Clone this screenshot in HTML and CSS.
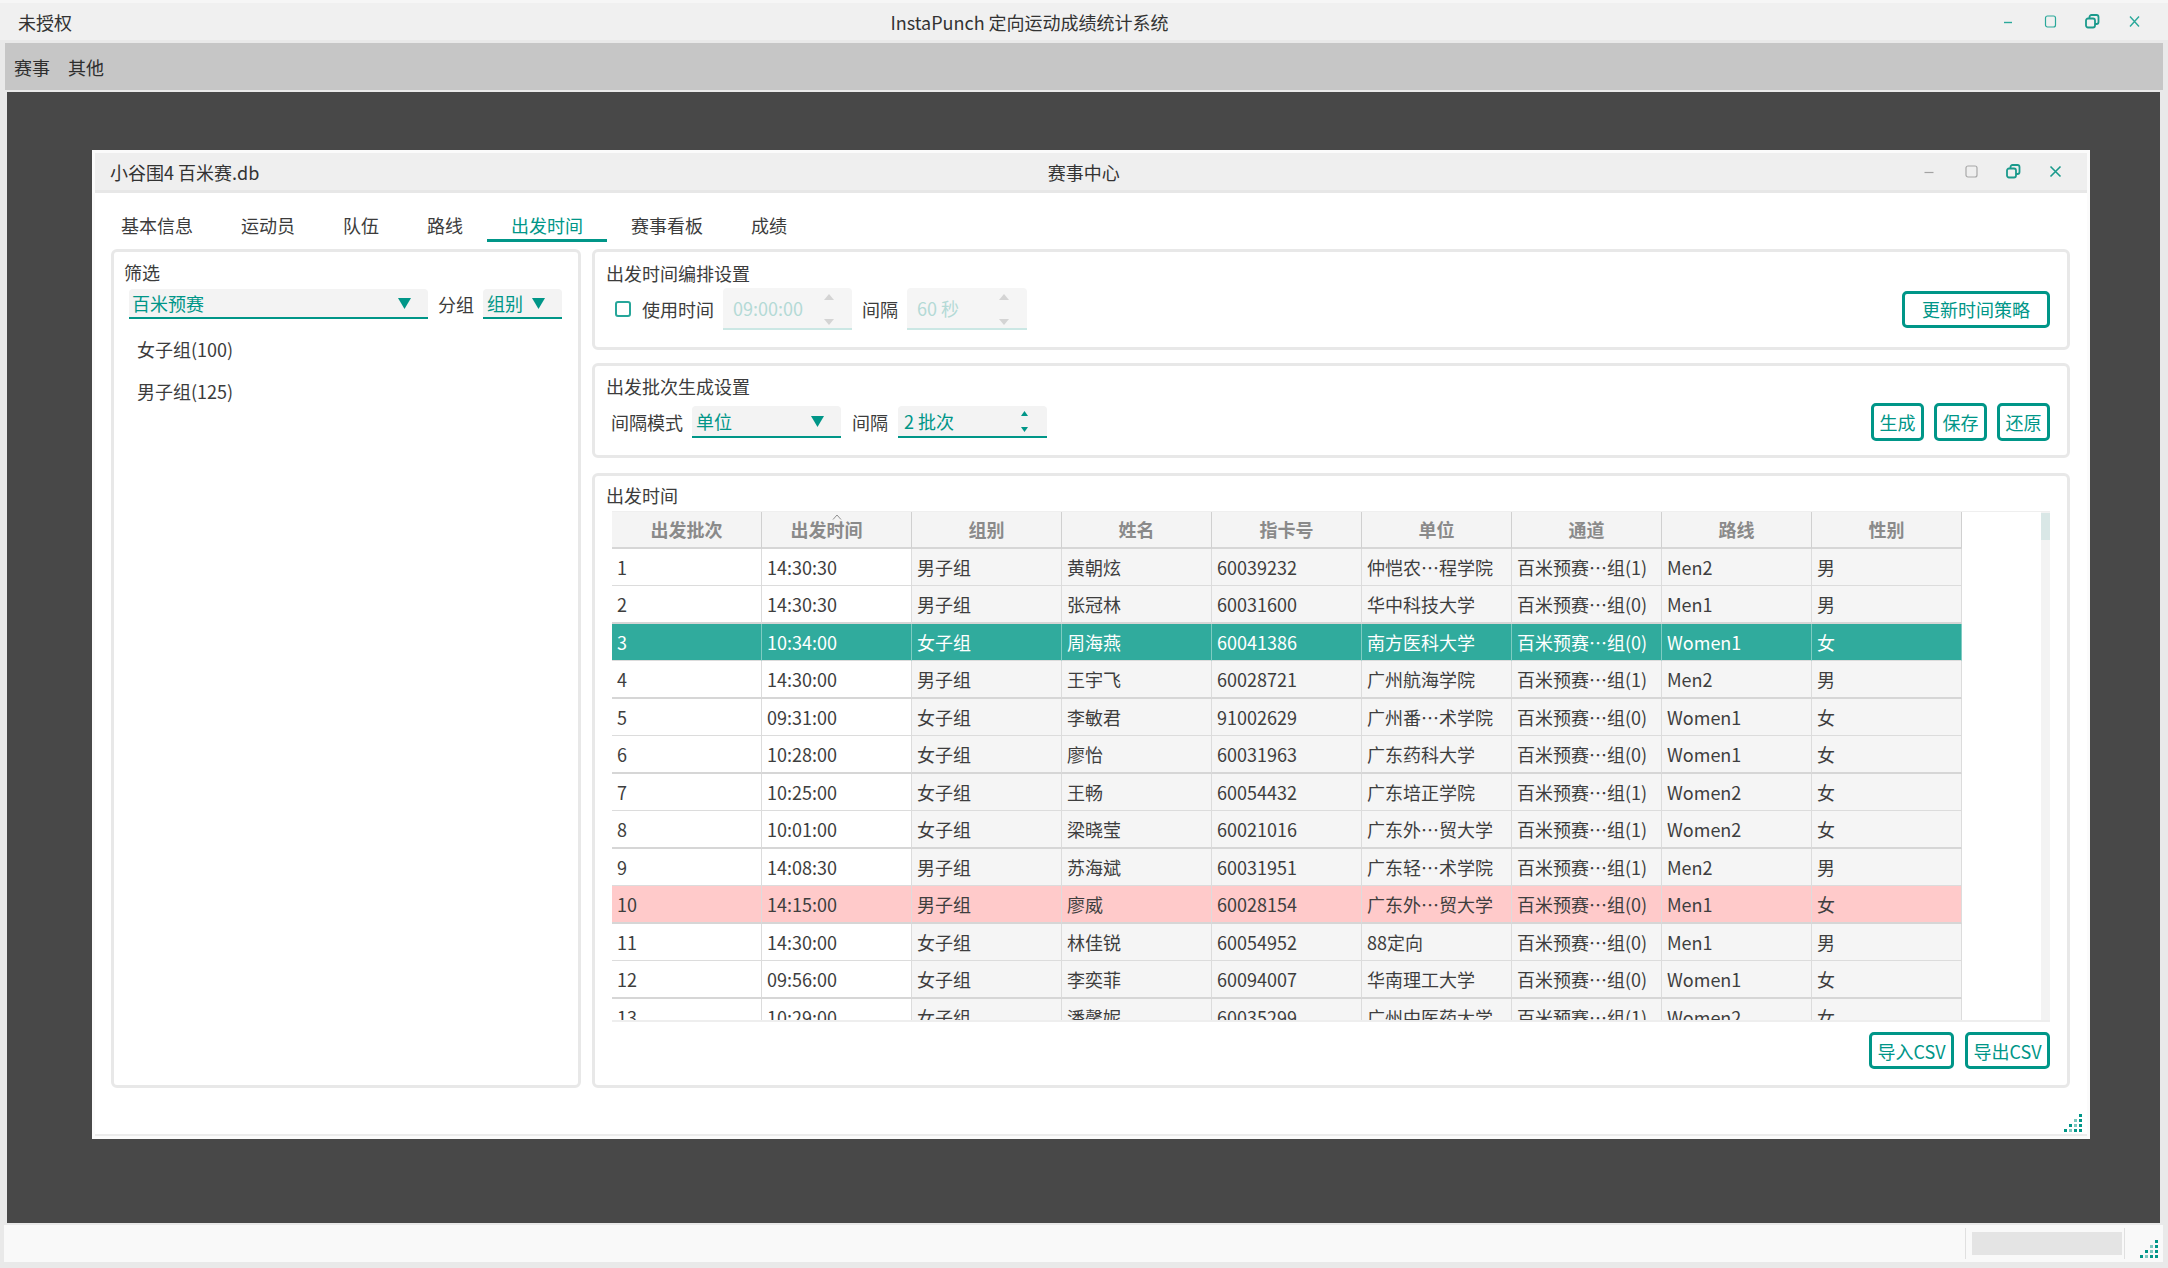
FILE: index.html
```html
<!DOCTYPE html>
<html lang="zh-CN">
<head>
<meta charset="utf-8">
<title>InstaPunch 定向运动成绩统计系统</title>
<link rel="stylesheet" href="styles.css">
</head>
<body>
<div class="app">
  <div class="titlebar">
    <div class="tb-label">未授权</div>
    <div class="tb-title">InstaPunch 定向运动成绩统计系统</div>
    <div class="controls outer-controls">
      <span class="ctl"><svg width="12" height="12" viewBox="0 0 12 12"><line x1="2" y1="6.5" x2="10" y2="6.5" stroke="#2aa89a" stroke-width="1.4"/></svg></span>
      <span class="ctl"><svg width="13" height="13" viewBox="0 0 13 13"><rect x="1.5" y="1" width="10" height="11" rx="2" fill="none" stroke="#2aa89a" stroke-width="1.2"/></svg></span>
      <span class="ctl"><svg width="15" height="15" viewBox="0 0 15 15"><rect x="4.5" y="1" width="9" height="9" rx="2" fill="none" stroke="#1a9a8c" stroke-width="1.8"/><rect x="1" y="4.5" width="9" height="9" rx="2" fill="#f0f0f0" stroke="#1a9a8c" stroke-width="1.8"/></svg></span>
      <span class="ctl"><svg width="13" height="13" viewBox="0 0 13 13"><path d="M2 1.5 L11 11.5 M11 1.5 L2 11.5" stroke="#2aa89a" stroke-width="1.4" fill="none"/></svg></span>
    </div>
  </div>
  <div class="menubar">
    <span class="menu-item">赛事</span>
    <span class="menu-item">其他</span>
  </div>
  <div class="mdi">
    <div class="subwin">
      <div class="sub-titlebar">
        <div class="tb-label">小谷围4 百米赛.db</div>
        <div class="tb-title">赛事中心</div>
        <div class="controls sub-controls">
          <span class="ctl"><svg width="12" height="12" viewBox="0 0 12 12"><line x1="1.5" y1="6.5" x2="10.5" y2="6.5" stroke="#a3a3a3" stroke-width="1.2"/></svg></span>
          <span class="ctl"><svg width="13" height="13" viewBox="0 0 13 13"><rect x="1" y="1" width="11" height="11" rx="2" fill="none" stroke="#a8a8a8" stroke-width="1.2"/></svg></span>
          <span class="ctl"><svg width="15" height="15" viewBox="0 0 15 15"><rect x="4.5" y="1" width="9" height="9" rx="2" fill="none" stroke="#1a9a8c" stroke-width="1.8"/><rect x="1" y="4.5" width="9" height="9" rx="2" fill="#efefef" stroke="#1a9a8c" stroke-width="1.8"/></svg></span>
          <span class="ctl"><svg width="13" height="13" viewBox="0 0 13 13"><path d="M1.5 1.5 L11.5 11.5 M11.5 1.5 L1.5 11.5" stroke="#1a9a8c" stroke-width="1.6" fill="none"/></svg></span>
        </div>
      </div>
      <div class="sub-content">
        <div class="tabs">
          <span class="tab">基本信息</span>
          <span class="tab">运动员</span>
          <span class="tab">队伍</span>
          <span class="tab">路线</span>
          <span class="tab active">出发时间</span>
          <span class="tab">赛事看板</span>
          <span class="tab">成绩</span>
        </div>
        <div class="panels">
          <div class="panel left-panel">
            <div class="flabel">筛选</div>
            <div class="filter-row">
              <div class="combo combo-race"><span>百米预赛</span><svg width="13" height="11" viewBox="0 0 13 11"><polygon points="0,0 13,0 6.5,11" fill="#009688"/></svg></div>
              <span class="lbl">分组</span>
              <div class="combo combo-group"><span>组别</span><svg width="13" height="11" viewBox="0 0 13 11"><polygon points="0,0 13,0 6.5,11" fill="#009688"/></svg></div>
            </div>
            <div class="group-list">
              <div class="group-item">女子组(100)</div>
              <div class="group-item">男子组(125)</div>
            </div>
          </div>
          <div class="right-col">
            <div class="panel box1">
              <div class="box-title">出发时间编排设置</div>
              <div class="row1">
                <span class="checkbox"></span>
                <span class="lbl lbl-use">使用时间</span>
                <div class="spin spin-dis spin-time">
                  <span>09:00:00</span>
                  <span class="arrows dis-arrows">
                    <svg width="10" height="6" viewBox="0 0 10 6"><polygon points="0,6 10,6 5,0" fill="#d4d4d4"/></svg>
                    <svg width="10" height="6" viewBox="0 0 10 6"><polygon points="0,0 10,0 5,6" fill="#d4d4d4"/></svg>
                  </span>
                </div>
                <span class="lbl lbl-gap1">间隔</span>
                <div class="spin spin-dis spin-sec">
                  <span>60 秒</span>
                  <span class="arrows dis-arrows">
                    <svg width="10" height="6" viewBox="0 0 10 6"><polygon points="0,6 10,6 5,0" fill="#d4d4d4"/></svg>
                    <svg width="10" height="6" viewBox="0 0 10 6"><polygon points="0,0 10,0 5,6" fill="#d4d4d4"/></svg>
                  </span>
                </div>
                <button class="btn btn-wide">更新时间策略</button>
              </div>
            </div>
            <div class="panel box2">
              <div class="box-title">出发批次生成设置</div>
              <div class="row2">
                <span class="lbl lbl-mode">间隔模式</span>
                <div class="combo combo-unit"><span>单位</span><svg width="13" height="11" viewBox="0 0 13 11"><polygon points="0,0 13,0 6.5,11" fill="#009688"/></svg></div>
                <span class="lbl lbl-gap2">间隔</span>
                <div class="spin spin-batch">
                  <span>2 批次</span>
                  <span class="arrows en-arrows">
                    <svg width="7" height="5" viewBox="0 0 7 5"><polygon points="0,5 7,5 3.5,0" fill="#009688"/></svg>
                    <svg width="7" height="5" viewBox="0 0 7 5"><polygon points="0,0 7,0 3.5,5" fill="#009688"/></svg>
                  </span>
                </div>
                <div class="btn-group">
                  <button class="btn btn-sm">生成</button>
                  <button class="btn btn-sm">保存</button>
                  <button class="btn btn-sm">还原</button>
                </div>
              </div>
            </div>
            <div class="panel box3">
              <div class="box-title">出发时间</div>
              <div class="tview">
                <div class="tgrid">
                  <div class="thead">
                    <div class="th">出发批次</div>
                    <div class="th sorted">出发时间<svg class="sort" width="10" height="6" viewBox="0 0 10 6"><polyline points="1,5.5 5,1 9,5.5" fill="none" stroke="#8f8f8f" stroke-width="1"/></svg></div>
                    <div class="th">组别</div>
                    <div class="th">姓名</div>
                    <div class="th">指卡号</div>
                    <div class="th">单位</div>
                    <div class="th">通道</div>
                    <div class="th">路线</div>
                    <div class="th">性别</div>
                  </div>
                  <div class="tbody">
                    <div class="tr"><div class="td">1</div><div class="td">14:30:30</div><div class="td">男子组</div><div class="td">黄朝炫</div><div class="td">60039232</div><div class="td">仲恺农…程学院</div><div class="td">百米预赛…组(1)</div><div class="td">Men2</div><div class="td">男</div></div>
                    <div class="tr"><div class="td">2</div><div class="td">14:30:30</div><div class="td">男子组</div><div class="td">张冠林</div><div class="td">60031600</div><div class="td">华中科技大学</div><div class="td">百米预赛…组(0)</div><div class="td">Men1</div><div class="td">男</div></div>
                    <div class="tr sel"><div class="td">3</div><div class="td">10:34:00</div><div class="td">女子组</div><div class="td">周海燕</div><div class="td">60041386</div><div class="td">南方医科大学</div><div class="td">百米预赛…组(0)</div><div class="td">Women1</div><div class="td">女</div></div>
                    <div class="tr"><div class="td">4</div><div class="td">14:30:00</div><div class="td">男子组</div><div class="td">王宇飞</div><div class="td">60028721</div><div class="td">广州航海学院</div><div class="td">百米预赛…组(1)</div><div class="td">Men2</div><div class="td">男</div></div>
                    <div class="tr"><div class="td">5</div><div class="td">09:31:00</div><div class="td">女子组</div><div class="td">李敏君</div><div class="td">91002629</div><div class="td">广州番…术学院</div><div class="td">百米预赛…组(0)</div><div class="td">Women1</div><div class="td">女</div></div>
                    <div class="tr"><div class="td">6</div><div class="td">10:28:00</div><div class="td">女子组</div><div class="td">廖怡</div><div class="td">60031963</div><div class="td">广东药科大学</div><div class="td">百米预赛…组(0)</div><div class="td">Women1</div><div class="td">女</div></div>
                    <div class="tr"><div class="td">7</div><div class="td">10:25:00</div><div class="td">女子组</div><div class="td">王畅</div><div class="td">60054432</div><div class="td">广东培正学院</div><div class="td">百米预赛…组(1)</div><div class="td">Women2</div><div class="td">女</div></div>
                    <div class="tr"><div class="td">8</div><div class="td">10:01:00</div><div class="td">女子组</div><div class="td">梁晓莹</div><div class="td">60021016</div><div class="td">广东外…贸大学</div><div class="td">百米预赛…组(1)</div><div class="td">Women2</div><div class="td">女</div></div>
                    <div class="tr"><div class="td">9</div><div class="td">14:08:30</div><div class="td">男子组</div><div class="td">苏海斌</div><div class="td">60031951</div><div class="td">广东轻…术学院</div><div class="td">百米预赛…组(1)</div><div class="td">Men2</div><div class="td">男</div></div>
                    <div class="tr warn"><div class="td">10</div><div class="td">14:15:00</div><div class="td">男子组</div><div class="td">廖威</div><div class="td">60028154</div><div class="td">广东外…贸大学</div><div class="td">百米预赛…组(0)</div><div class="td">Men1</div><div class="td">女</div></div>
                    <div class="tr"><div class="td">11</div><div class="td">14:30:00</div><div class="td">女子组</div><div class="td">林佳锐</div><div class="td">60054952</div><div class="td">88定向</div><div class="td">百米预赛…组(0)</div><div class="td">Men1</div><div class="td">男</div></div>
                    <div class="tr"><div class="td">12</div><div class="td">09:56:00</div><div class="td">女子组</div><div class="td">李奕菲</div><div class="td">60094007</div><div class="td">华南理工大学</div><div class="td">百米预赛…组(0)</div><div class="td">Women1</div><div class="td">女</div></div>
                    <div class="tr"><div class="td">13</div><div class="td">10:29:00</div><div class="td">女子组</div><div class="td">潘馨妮</div><div class="td">60035299</div><div class="td">广州中医药大学</div><div class="td">百米预赛…组(1)</div><div class="td">Women2</div><div class="td">女</div></div>
                  </div>
                </div>
                <div class="tspacer"></div>
                <div class="vscroll"><div class="vhandle"></div></div>
              </div>
              <div class="csv-row">
                <button class="btn btn-csv">导入CSV</button>
                <button class="btn btn-csv">导出CSV</button>
              </div>
            </div>
          </div>
        </div>
      </div>
      <svg class="grip sub-grip" width="22" height="22" viewBox="0 0 22 22">
        <rect x="17" y="2" width="3" height="3" fill="#009688"/>
        <rect x="12" y="7" width="3" height="3" fill="#7cc8c0"/>
        <rect x="17" y="7" width="3" height="3" fill="#009688"/>
        <rect x="7" y="12" width="3" height="3" fill="#009688"/>
        <rect x="12" y="12" width="3" height="3" fill="#7cc8c0"/>
        <rect x="17" y="12" width="3" height="3" fill="#009688"/>
        <rect x="2" y="17" width="3" height="3" fill="#009688"/>
        <rect x="7" y="17" width="3" height="3" fill="#7cc8c0"/>
        <rect x="12" y="17" width="3" height="3" fill="#009688"/>
        <rect x="17" y="17" width="3" height="3" fill="#009688"/>
      </svg>
    </div>
  </div>
  <div class="statusbar">
    <span class="sb-sep"></span>
    <span class="sb-box"></span>
    <span class="sb-sep"></span>
    <svg class="grip sb-grip" width="22" height="22" viewBox="0 0 22 22">
      <rect x="17" y="2" width="3" height="3" fill="#009688"/>
      <rect x="12" y="7" width="3" height="3" fill="#7cc8c0"/>
      <rect x="17" y="7" width="3" height="3" fill="#009688"/>
      <rect x="7" y="12" width="3" height="3" fill="#009688"/>
      <rect x="12" y="12" width="3" height="3" fill="#7cc8c0"/>
      <rect x="17" y="12" width="3" height="3" fill="#009688"/>
      <rect x="2" y="17" width="3" height="3" fill="#009688"/>
      <rect x="7" y="17" width="3" height="3" fill="#7cc8c0"/>
      <rect x="12" y="17" width="3" height="3" fill="#009688"/>
      <rect x="17" y="17" width="3" height="3" fill="#009688"/>
    </svg>
  </div>
</div>
</body>
</html>
```
FILE: styles.css
```css
* { box-sizing: border-box; }
html, body { margin: 0; padding: 0; }
body {
  width: 2168px;
  height: 1268px;
  overflow: hidden;
  font-family: "Noto Sans CJK SC", "Noto Sans", sans-serif;
  font-size: 18px;
  color: #3c3c3c;
  background: #e9e9e9;
}
button { font-family: inherit; font-size: 18px; cursor: default; }

.app {
  width: 2168px;
  height: 1268px;
  display: flex;
  flex-direction: column;
  background: #e9e9e9;
}

/* outer title bar */
.titlebar {
  height: 40px;
  flex: none;
  border-top: 3px solid #f6f6f6;
  background: #f0f0f0;
  display: flex;
  align-items: center;
  padding-left: 18px;
  color: #333;
}
.tb-label { line-height: 24px; white-space: nowrap; }
.tb-title { flex: 1; text-align: center; line-height: 24px; white-space: nowrap; }
.controls { display: flex; }
.ctl {
  width: 42px;
  height: 30px;
  display: flex;
  align-items: center;
  justify-content: center;
}
.outer-controls { margin-right: 13px; }

/* menu bar */
.menubar {
  height: 47px;
  flex: none;
  margin: 3px 5px 0 5px;
  background: #c6c6c6;
  display: flex;
  align-items: center;
  padding-left: 0;
  color: #2e2e2e;
}
.menu-item { padding: 0 9px; line-height: 24px; }

/* MDI area */
.mdi {
  height: 1131px;
  flex: none;
  margin: 2px 8px 0 7px;
  background: #484848;
  padding: 58px 0 0 85px;
}
.subwin {
  position: relative;
  width: 1998px;
  height: 989px;
  background: #fbfbfb;
  padding: 3px;
  display: flex;
  flex-direction: column;
}
.sub-titlebar {
  height: 40px;
  flex: none;
  background: #efefef;
  border-bottom: 3px solid #e7e7e7;
  display: flex;
  align-items: center;
  padding-left: 15px;
  color: #333;
}
.sub-controls { margin-right: 11px; }

.sub-content {
  flex: 1;
  background: #fff;
  padding: 0 17px 0 16px;
  border-bottom: 2px solid #ececec;
}

/* tabs */
.tabs {
  display: flex;
  margin: 18px 0 0 -14px;
}
.tab {
  padding: 0 24px;
  line-height: 28px;
  border-bottom: 3px solid transparent;
  color: #3c3c3c;
  white-space: nowrap;
}
.tab.active {
  color: #009688;
  border-bottom-color: #009688;
}

/* panels */
.panels {
  display: flex;
  gap: 11px;
  margin-top: 7px;
  height: 839px;
}
.panel {
  border: 3px solid #e8e8e8;
  border-radius: 6px;
  background: #fff;
}
.left-panel {
  width: 470px;
  flex: none;
  padding: 8px 10px;
}
.flabel { line-height: 24px; color: #3c3c3c; }
.filter-row {
  display: flex;
  align-items: center;
  margin: 5px 0 0 5px;
  height: 30px;
}
.lbl { white-space: nowrap; line-height: 24px; color: #3c3c3c; }
.filter-row .lbl { margin: 0 9px 0 10px; }

.combo {
  display: flex;
  align-items: center;
  justify-content: space-between;
  background: #f3f3f3;
  border-bottom: 2px solid #009688;
  border-radius: 4px 4px 0 0;
  color: #009688;
  white-space: nowrap;
}
.combo svg { flex: none; }
.combo-race { width: 299px; height: 30px; padding: 0 17px 0 3px; }
.combo-group { width: 79px; height: 30px; padding: 0 17px 0 4px; }
.combo-unit { width: 149px; height: 32px; padding: 0 17px 0 4px; margin-left: 9px; }

.group-list { margin-top: 9px; }
.group-item {
  height: 42px;
  line-height: 42px;
  padding-left: 13px;
  color: #3c3c3c;
}

.right-col {
  flex: 1;
  display: flex;
  flex-direction: column;
}
.box-title { line-height: 24px; color: #3c3c3c; }

.box1 { height: 101px; flex: none; padding: 9px 17px 0 11px; }
.row1 {
  display: flex;
  align-items: center;
  height: 42px;
  margin-top: 3px;
}
.checkbox {
  width: 16px;
  height: 16px;
  margin-left: 9px;
  border: 2px solid #26a69a;
  border-radius: 3px;
  background: #fff;
  flex: none;
}
.lbl-use { margin-left: 11px; }
.lbl-gap1 { margin-left: 10px; }
.lbl-gap2 { margin-left: 11px; }

.spin {
  display: flex;
  align-items: center;
  justify-content: space-between;
  white-space: nowrap;
  border-radius: 4px 4px 0 0;
}
.spin-dis {
  height: 42px;
  background: #f5f5f5;
  border-bottom: 2px solid #cbe7e4;
  color: #b4dad6;
  padding: 0 18px 0 10px;
}
.spin-time { width: 129px; margin-left: 9px; }
.spin-sec { width: 120px; margin-left: 9px; }
.arrows {
  display: flex;
  flex-direction: column;
  justify-content: space-between;
}
.dis-arrows { height: 31px; margin-top: 2px; }
.spin-batch {
  width: 149px;
  height: 32px;
  margin-left: 10px;
  background: #f3f3f3;
  border-bottom: 2px solid #009688;
  color: #009688;
  padding: 0 19px 0 6px;
}
.en-arrows { height: 21px; }

.btn {
  border: 3px solid #009688;
  border-radius: 5px;
  background: #fff;
  color: #009688;
  display: flex;
  align-items: center;
  justify-content: center;
  padding: 0;
  white-space: nowrap;
  flex: none;
}
.btn-wide { width: 148px; height: 37px; margin-left: auto; }
.btn-sm { width: 53px; height: 38px; }
.btn-csv { width: 85px; height: 37px; }

.box2 { height: 95px; flex: none; margin-top: 13px; padding: 8px 17px 0 11px; }
.row2 {
  display: flex;
  align-items: center;
  height: 38px;
  margin-top: 5px;
}
.lbl-mode { margin-left: 5px; }
.btn-group { display: flex; gap: 10px; margin-left: auto; }

.box3 {
  flex: 1;
  margin-top: 15px;
  padding: 7px 17px 15px 11px;
  display: flex;
  flex-direction: column;
}

/* table */
.tview {
  height: 511px;
  flex: none;
  margin: 4px 0 0 6px;
  display: flex;
  background: #fff;
  overflow: hidden;
  border-top: 1px solid #efefef;
  border-bottom: 2px solid #eeeeee;
}
.tgrid { width: 1350px; flex: none; }
.thead {
  display: grid;
  grid-template-columns: repeat(9, 150px);
  height: 37px;
}
.th {
  position: relative;
  background: #f4f4f4;
  border-right: 1px solid #d0d0d0;
  border-bottom: 2px solid #d6d6d6;
  text-align: center;
  line-height: 35px;
  color: #8a8a8a;
  font-weight: bold;
  white-space: nowrap;
}
.th.sorted { padding-right: 20px; }
.sort {
  position: absolute;
  top: 2px;
  left: 50%;
  margin-left: -5px;
}
.tr {
  display: grid;
  grid-template-columns: repeat(9, 150px);
  height: 37px;
}
.tr:nth-child(even) { height: 38px; }
.td {
  border-right: 1px solid #dcdcdc;
  border-bottom: 1px solid #dcdcdc;
  padding-left: 5px;
  line-height: 37px;
  background: #f5f5f5;
  color: #3e3e3e;
  white-space: nowrap;
  overflow: hidden;
}
.tr:nth-child(even) .td { border-bottom-width: 2px; border-bottom-color: #d6d6d6; }
.td:nth-child(-n+2) { background: #fff; }
.tr.sel .td {
  background: #30ab9d;
  color: #fff;
  border-right-color: #7fcbc2;
}
.tr.warn .td { background: #ffcaca; }

.tspacer { flex: 1; }
.vscroll {
  width: 9px;
  flex: none;
  background: #f3f3f3;
}
.vhandle {
  height: 27px;
  margin-top: 1px;
  background: #d9e7e6;
}

.csv-row {
  display: flex;
  justify-content: flex-end;
  gap: 11px;
  margin-top: 10px;
}

.grip { display: block; }
.sub-grip {
  position: absolute;
  right: 6px;
  bottom: 5px;
}

/* status bar */
.statusbar {
  height: 37px;
  flex: none;
  margin: 2px 5px 0 4px;
  background: #f9f9f9;
  display: flex;
  align-items: center;
  justify-content: flex-end;
}
.sb-sep { width: 1px; height: 31px; background: #e0e0e0; }
.sb-box { width: 150px; height: 23px; background: #e4e4e4; margin: 0 2px 0 6px; }
.sb-grip { align-self: flex-end; margin: 0 3px 2px 13px; }
```
